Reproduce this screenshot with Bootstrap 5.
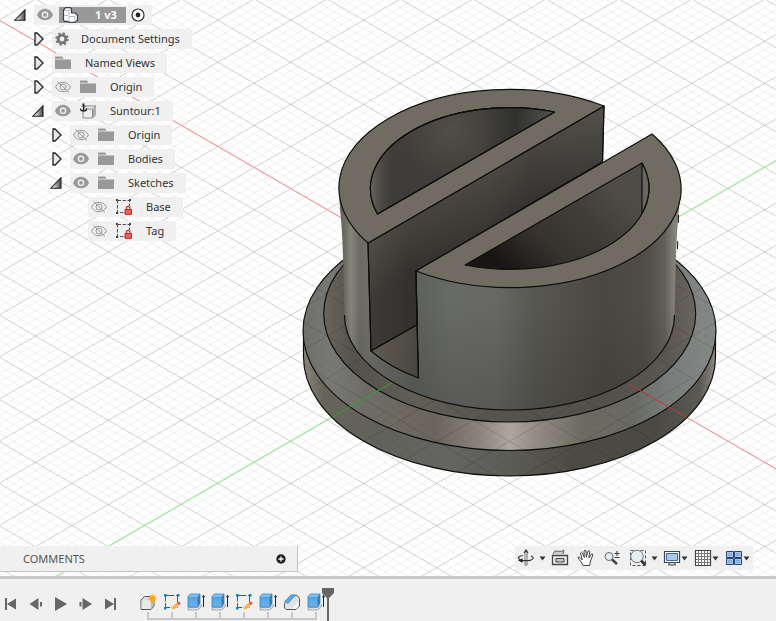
<!DOCTYPE html>
<html lang="en">
<head>
<meta charset="utf-8">
<meta name="viewport" content="width=device-width, initial-scale=1">
<title>Suntour cap</title>
<link rel="stylesheet" href="https://cdn.jsdelivr.net/npm/bootstrap@5.3.0/dist/css/bootstrap.min.css">
<style>
body{font-family:"Noto Sans","DejaVu Sans",sans-serif;font-size:11px;line-height:20px;color:#333;background:#fff}
button{border:0;background:none;padding:0;color:inherit;font:inherit}
svg{display:block}
.scene{inset:0}
.canvas-area{padding:3px 0 4px}
.tree-row{height:24px}
.lvl0{padding-left:14px}.lvl1{padding-left:32px}.lvl2{padding-left:50px}.lvl3{padding-left:88px}
.twist{width:20px}
.shut-icon{margin-left:2px}
.chip{background:#f0f0f0;height:20px;padding:0 12px 0 3px}
.root-chip{padding-right:6px}
.chip svg{width:16px;height:16px}
.gap-icon{margin-right:9px}
.txt-lead{margin-left:14px}
.gear-lead{margin-left:10px}
.root-name{background:#989898;color:#fff;font-weight:700;height:16px;line-height:16px;padding:0 9px 0 2px}
.root-eye{margin-right:6px}
.root-name svg{width:18px}
.comments{width:298px;height:26px;background:#f0f0f0;border:solid #c4c4c4;border-width:0 1px 1px 0;padding:0 11px 0 23px;color:#555}
.view-tools{background:#f0f0f0;height:24px;margin:0 23px 2px 0;padding:0 3px 0 2px}
.view-tools svg{width:18px;height:18px}
.view-tools .drop svg{width:7px;height:5px}
.tool-gap{margin-right:8px}
.drop-gap{margin:0 5px 0 4px}
.drop-near{margin-right:6px}
.timeline{background:#f0f0f0;border-top:3px solid #c9c9c9;height:45px;color:#666}
.transport{gap:11px;padding:2px 18px 0 4px;height:48px}
.feature{width:24px}
.feature svg{width:18px;height:18px;margin:14px auto 0}
.rail{width:24px;height:8px;margin-top:1px;background:linear-gradient(#c8c8c8,#c8c8c8) center/2px 8px no-repeat,linear-gradient(#c8c8c8,#c8c8c8) bottom/24px 2px no-repeat}
.feature:first-child .rail{background-position:center,12px 100%}
.feature.final .rail{background-position:center,-12px 100%}
.marker{margin-left:-6px;padding-top:9px}
</style>
<script src="https://cdn.jsdelivr.net/npm/bootstrap@5.3.0/dist/js/bootstrap.bundle.min.js"></script>
</head>
<body class="vh-100 d-flex flex-column overflow-hidden">

<svg width="0" height="0" class="position-absolute" aria-hidden="true">
<defs>
<linearGradient id="gTri"><stop offset=".2" stop-color="#eee"/><stop offset="1" stop-color="#444"/></linearGradient>
<linearGradient id="gBlue" x2="0" y2="1"><stop offset="0" stop-color="#4f9fdf"/><stop offset="1" stop-color="#6bb3ea"/></linearGradient>
<symbol id="open" viewBox="0 0 12 12"><path d="M.8 11.2H11V.8z" fill="url(#gTri)" stroke="#222" stroke-width="1.1"/></symbol>
<symbol id="shut" viewBox="0 0 10 14"><path d="M1 1v12h2l6-6-6-6z" fill="#e4e8ec" stroke="#222" stroke-width="1.3"/></symbol>
<symbol id="eye" viewBox="0 0 16 16"><path d="M0 8.2C3-.3 13-.3 16 8.2 13 15 3 15 0 8.200z" fill="#999"/><circle cx="8" cy="7.800" r="3.300" fill="#f0f0f0"/><circle cx="8" cy="7.800" r="1.900" fill="#999"/></symbol>
<symbol id="hid" viewBox="0 0 16 16"><g fill="none" stroke="#999" stroke-width="1"><path d="M.6 8C3.500 1.700 12.500 1.700 15.400 8 12.500 14.300 3.500 14.300.6 8z"/><circle cx="8" cy="8" r="3"/><path d="M2.500 2.500l11.500 11"/></g></symbol>
<symbol id="folder" viewBox="0 0 16 16"><path d="M0 1.500h7l1.500 2.200H0zM0 4.500h16V14H0z" fill="#999"/></symbol>
<symbol id="gear" viewBox="0 0 16 16"><circle cx="7" cy="8" r="3.800" fill="none" stroke="#777" stroke-width="2.800"/><circle cx="7" cy="8" r="5.700" fill="none" stroke="#777" stroke-width="2" stroke-dasharray="2.300 2.180"/></symbol>
<symbol id="cubes" viewBox="0 0 18 16"><path d="M2.500 3L4.500.7h4.800L10.500 2v4h3.700L16.500 8v5l-2.300 2.400H8L7 14.300H3.500L2.500 13z" fill="#fff" stroke="#3c3f45" stroke-width="1.200" stroke-linejoin="round"/><path d="M3 3.500h5L10 2M8 3.500V8M3 8.500h4.500M8.500 9.500h5.200L16 8M13.700 9.500V15M8 9v6" fill="none" stroke="#aab1bd" stroke-width=".9"/></symbol>
<symbol id="anchor" viewBox="0 0 16 16"><path d="M3 6l3-3h10v8.500L12.500 15H3z" fill="#eee" stroke="#888"/><path d="M3 6h9.500v9M12.500 6L16 3" fill="none" stroke="#888"/><path d="M13 6.500l2.500-2.500v7.300L13 14z" fill="#aaa"/><path d="M3.500 1.500v7M1.500 3h4M.3 5.500C.5 9 6.500 9 6.700 5.500" fill="none" stroke="#222" stroke-width="1.200"/><circle cx="3.500" cy="1.200" r="1" fill="#222"/></symbol>
<symbol id="locked" viewBox="0 0 16 16"><path d="M1.500 1.500h12v12h-12z" fill="none" stroke="#555" stroke-dasharray="3.500 1.500"/><path d="M0 0h2v2H0zM13 0h2v2h-2zM0 13h2v2H0z" fill="#444"/><path d="M8 7h8v9H8z" fill="#f0f0f0"/><path d="M9 10.500h6.500v4.800H9z" fill="#e36464" stroke="#c22"/><path d="M10.500 10V8.300q1.700-2 3.400 0V10" fill="none" stroke="#c22" stroke-width="1.200"/></symbol>
<symbol id="caret" viewBox="0 0 7 5"><path d="M.5.500h6L3.500 4.500z" fill="#333"/></symbol>
<symbol id="orbit" viewBox="0 0 18 18"><path d="M8 2.500h2V16H8z" fill="#fff" stroke="#445" stroke-width=".8"/><path d="M7 4l2-3 2 3M14 7c3 1 3 3.500-1 4.300-3 .7-7 .2-11 0M6 6.500C1.500 7 0 9 3 10.500" fill="none" stroke="#333" stroke-width="1.200"/><path d="M1 11.500l4.500-2.300v4.600z" fill="#222"/></symbol>
<symbol id="look" viewBox="0 0 18 18"><path d="M1.500 6.500h15v9h-15z" fill="#e8eaec" stroke="#444" stroke-width="1.300"/><path d="M5 9.500h8v3.500H5z" fill="#c4cad0" stroke="#444"/><path d="M2 5l2-3 6 .5 3-1.500-1 4" fill="#ccc" stroke="#666"/></symbol>
<symbol id="pan" viewBox="0 0 18 18"><path d="M6 16.500C5 13 2 11 1 8.500q1-1 2.500.5l1.800 2L3.500 4Q4.300 2.500 5.500 4L7.300 8.500 7 2Q8 .5 9 2l.3 6.300L11 2q1.200-1 1.800.5l-1 6.500 2.700-4q1.500-.3 1.300 1L13.500 12l-1 4.500z" fill="#fff" stroke="#444" stroke-width="1" stroke-linejoin="round"/></symbol>
<symbol id="zoomer" viewBox="0 0 18 18"><circle cx="6" cy="7.500" r="4" fill="#e8f2f5" stroke="#667"/><path d="M9 10.500l5 4.500" stroke="#444" stroke-width="2.600"/><path d="M11.500 4.500h5M14 2v5M11.500 8.500h5" stroke="#333"/></symbol>
<symbol id="zoomwin" viewBox="0 0 18 18"><path d="M1.500 1.500h15v15h-15z" fill="none" stroke="#555" stroke-dasharray="3 2"/><circle cx="8" cy="7.500" r="6.200" fill="#e3f0ef" stroke="#778"/><path d="M12 11.500l4.500 4.500" stroke="#333" stroke-width="2.600"/></symbol>
<symbol id="display" viewBox="0 0 18 18"><path d="M1.500 2.500h15v11h-15z" fill="#fff" stroke="#444" stroke-width="1.200"/><path d="M3.500 4.500h11v7h-11z" fill="#a9c8ee" stroke="#3568a4"/><path d="M6.500 13.500h5l1 2.500h-7z" fill="#ddd" stroke="#444"/></symbol>
<symbol id="gridic" viewBox="0 0 18 18"><path d="M1.500 1.500h15v15h-15z" fill="#fff" stroke="#444" stroke-width="1.200"/><path d="M4.500 2v14M7.500 2v14M10.500 2v14M13.500 2v14M2 4.500h14M2 7.500h14M2 10.500h14M2 13.500h14" stroke="#777"/></symbol>
<symbol id="panes" viewBox="0 0 18 18"><g fill="#a9c8ee" stroke="#2b446b" stroke-width="1"><path d="M1.500 2.500h7v6h-7zM9.500 2.500h7v6h-7zM1.500 9.500h7v6h-7zM9.500 9.500h7v6h-7z"/></g><path d="M3.500 4.500h3v2h-3zM11.500 4.500h3v2h-3zM3.500 11.500h3v2h-3zM11.500 11.500h3v2h-3z" fill="none" stroke="#7ba6dd"/></symbol>
<symbol id="comp" viewBox="0 0 18 18"><path d="M2 7l3.500-3.500H15V13l-3 3.500H2z" fill="#ddd" stroke="#555" stroke-linejoin="round"/><path d="M2.500 7.500h9V16h-9z" fill="#e8e8e8"/><path d="M12 8l2.500-2.500V13L12 16z" fill="#bbb"/><path d="M13 0l1 3 3-1-1.500 2.500L18 6l-2.500.7.5 2.800-2.700-1.700L11.500 10l-.2-3L8.500 6l2.600-1.200L10 2l2.500 1z" fill="#ffa800"/></symbol>
<symbol id="sketch" viewBox="0 0 18 18"><path d="M2.500 2.500h12v12h-12z" fill="none" stroke="#555" stroke-dasharray="9 1.500"/><path d="M1 1h2.500v2.500H1zM14 1h2.500v2.500H14zM1 14h2.500v2.500H1z" fill="#0a86dc"/><path d="M8 17.500l1-4 5-5 3.500 3-5.500 5z" fill="#f0f0f0"/><path d="M9 16.500l.8-3 4-3.800 2.200 2.200-4 3.800z" fill="#fbb13c"/><path d="M13.800 9.700l1.500-1.300q2 .3 2.300 2L16 11.900z" fill="#e5484d"/></symbol>
<symbol id="extrude" viewBox="0 0 18 18"><path d="M1 14.500h10l3.500-3v1.800L11 17H1z" fill="#ddd" stroke="#999" stroke-width=".7"/><path d="M1 3.500L3.500 1H13v9.500L10.500 14H1z" fill="url(#gBlue)" stroke="#3a80bd" stroke-width=".8" stroke-linejoin="round"/><path d="M10.500 4L13 1.500v9L10.500 13.500z" fill="#3d7db5"/><path d="M1.500 3.700L3.700 1.500h8.700l-2 2.200z" fill="#86c4f3"/><path d="M16.500 14V3" stroke="#222" stroke-width="1"/><path d="M15 4.200l1.500-2.700L18 4.200z" fill="#222"/></symbol>
<symbol id="chamfer" viewBox="0 0 18 18"><path d="M1.500 10.500L9.500 2l4.500.5 2.500 3V13L13 16.500H3L1.500 15z" fill="#e2e2e2" stroke="#555" stroke-linejoin="round"/><path d="M1.500 8.500L8 2h4.500L5 10.500z" fill="#5ba8e5" stroke="#3a80bd" stroke-width=".7"/><path d="M8.500 16l7-7V13L13 16z" fill="#fff"/></symbol>
</defs>
</svg>

<main class="canvas-area position-relative flex-grow-1 d-flex flex-column">
<svg class="scene position-absolute w-100 h-100" viewBox="0 0 776 576" preserveAspectRatio="xMidYMid slice" role="img" aria-label="3D model of a slotted cap on a ground grid">
<defs>
<linearGradient id="cyl" gradientUnits="userSpaceOnUse" x1="339" y1="0" x2="680" y2="0"><stop offset="0" stop-color="#62615a"/><stop offset=".018" stop-color="#6d6c64"/><stop offset=".035" stop-color="#87857a"/><stop offset=".06" stop-color="#6b6a63"/><stop offset=".09" stop-color="#6f706b"/><stop offset=".22" stop-color="#5d605b"/><stop offset=".33" stop-color="#686a66"/><stop offset=".46" stop-color="#676865"/><stop offset=".58" stop-color="#575650"/><stop offset=".78" stop-color="#4a4741"/><stop offset=".9" stop-color="#4f4d47"/><stop offset=".955" stop-color="#605f59"/><stop offset=".985" stop-color="#85837a"/><stop offset="1" stop-color="#77756d"/></linearGradient>
<linearGradient id="shade" gradientUnits="userSpaceOnUse" x1="0" y1="260" x2="0" y2="410"><stop offset=".3" stop-color="#222" stop-opacity="0"/><stop offset="1" stop-color="#222" stop-opacity=".22"/></linearGradient>
<linearGradient id="rim" gradientUnits="userSpaceOnUse" x1="303" y1="0" x2="716" y2="0"><stop offset="0" stop-color="#8c877b"/><stop offset=".05" stop-color="#67645b"/><stop offset=".18" stop-color="#62625c"/><stop offset=".35" stop-color="#646661"/><stop offset=".5" stop-color="#5d5d58"/><stop offset=".65" stop-color="#4e4b45"/><stop offset=".85" stop-color="#4b4944"/><stop offset=".96" stop-color="#5c5a54"/><stop offset="1" stop-color="#8f8c84"/></linearGradient>
<linearGradient id="cham" gradientUnits="userSpaceOnUse" x1="303" y1="0" x2="716" y2="0"><stop offset="0" stop-color="#70706b"/><stop offset=".07" stop-color="#787976"/><stop offset=".15" stop-color="#6f6d66"/><stop offset=".32" stop-color="#6b665d"/><stop offset=".43" stop-color="#8a867d"/><stop offset=".5" stop-color="#aca89f"/><stop offset=".56" stop-color="#938f86"/><stop offset=".68" stop-color="#6d6a60"/><stop offset=".8" stop-color="#696a64"/><stop offset=".88" stop-color="#787d7b"/><stop offset="1" stop-color="#858986"/></linearGradient>
<linearGradient id="ring" gradientUnits="userSpaceOnUse" x1="324" y1="0" x2="696" y2="0"><stop offset="0" stop-color="#6b665d"/><stop offset=".08" stop-color="#55524c"/><stop offset=".25" stop-color="#625f57"/><stop offset=".5" stop-color="#55534d"/><stop offset=".75" stop-color="#54514b"/><stop offset=".92" stop-color="#5a5650"/><stop offset="1" stop-color="#6b675f"/></linearGradient>
<linearGradient id="slot" gradientUnits="userSpaceOnUse" x1="368" y1="0" x2="604" y2="0"><stop offset="0" stop-color="#4e4b45"/><stop offset=".17" stop-color="#3f3c37"/><stop offset=".5" stop-color="#43403b"/><stop offset=".7" stop-color="#3b3935"/><stop offset="1" stop-color="#494742"/></linearGradient>
<linearGradient id="slotV" gradientUnits="userSpaceOnUse" x1="450" y1="180" x2="480" y2="240"><stop offset="0" stop-color="#77736a" stop-opacity=".25"/><stop offset="1" stop-color="#111" stop-opacity=".25"/></linearGradient>
<radialGradient id="pocketA" gradientUnits="userSpaceOnUse" cx="450" cy="130" r="110"><stop offset="0" stop-color="#514e48"/><stop offset=".45" stop-color="#403e3a"/><stop offset="1" stop-color="#3b3b38"/></radialGradient>
<linearGradient id="pocketEdge" gradientUnits="userSpaceOnUse" x1="370" y1="0" x2="555" y2="0"><stop offset="0" stop-color="#69675e"/><stop offset=".14" stop-color="#3f3d39" stop-opacity="0"/><stop offset=".6" stop-color="#343532" stop-opacity="0"/><stop offset=".78" stop-color="#2d2e2c" stop-opacity=".8"/><stop offset="1" stop-color="#555650"/></linearGradient>
<linearGradient id="pocketB" gradientUnits="userSpaceOnUse" x1="510" y1="272" x2="600" y2="175"><stop offset="0" stop-color="#171614"/><stop offset=".35" stop-color="#36332f"/><stop offset=".7" stop-color="#403e39"/><stop offset="1" stop-color="#4e4c47"/></linearGradient>
<linearGradient id="floor" gradientUnits="userSpaceOnUse" x1="375" y1="350" x2="418" y2="355"><stop offset="0" stop-color="#5f5b52"/><stop offset="1" stop-color="#494640"/></linearGradient>
<clipPath id="baseClip"><path d="M303 331A206.500 119.500 0 0 1 716 331L715.500 357A206 119 0 0 1 303.500 357z"/></clipPath>
</defs>
<g fill="none">
<path class="minor" stroke="#000" stroke-opacity=".065" stroke-width=".9"/>
<path class="major" stroke="#000" stroke-opacity=".18"/>
<path d="M-91-32L1109 661.300" stroke="#ff8c8c"/><path d="M-91 661.300L1109-32" stroke="#8cf58c"/>
</g>
<g stroke="#0d0d0b" stroke-width="1.150" stroke-linejoin="round">
<path d="M303.500 331V357A206 119 0 0 0 715.500 357V331z" fill="url(#rim)"/>
<ellipse cx="509.500" cy="331" rx="206.500" ry="119.500" fill="url(#cham)"/>
<ellipse cx="509.700" cy="313.500" rx="186" ry="108.500" fill="url(#ring)"/>
</g>
<g clip-path="url(#baseClip)" fill="none">
<path class="minor" stroke="#000" stroke-opacity=".04" stroke-width=".8"/>
<path class="major" stroke="#000" stroke-opacity=".12"/>
<path d="M509.500 315L1109 661.300" stroke="#c23b34"/><path d="M-91 661.300L509.500 315" stroke="#35a536"/>
</g>
<path d="M339 188.500L340 210Q343 230 344.500 315A165 95 0 0 0 674.500 315Q676 230 679 210L680 188.500z" fill="url(#cyl)"/>
<path d="M344.500 260V315A165 95 0 0 0 674.500 315V260z" fill="url(#shade)"/>
<path d="M344.500 315A165 95 0 0 0 674.500 315" fill="none" stroke="#0d0d0b" stroke-width="1.200"/>
<path d="M678.500 215l-1.500 50" stroke="#111" stroke-dasharray="8 18"/>
<g stroke="#0d0d0b" stroke-width="1.150" stroke-linejoin="round">
<path d="M368 243L604 106 602.500 162 416 271 417 325 371 351z" fill="url(#slot)"/>
<path d="M368 243L604 106 602.500 162 416 271 417 325 371 351z" fill="url(#slotV)"/>
<path d="M371 351L417 325 418.500 378Q391 368 371 351z" fill="url(#floor)"/>
<path d="M416 271L418.500 378" fill="none"/>
<path fill-rule="evenodd" d="M368 243A170.500 98.500 0 0 1 604 106zM377.500 214L554.500 112A139 81 0 0 0 377.500 214z" fill="#706c62"/>
<path d="M377.500 214L554.500 112A139 81 0 0 0 377.500 214z" fill="url(#pocketA)"/>
<path d="M377.500 214L554.500 112A139 81 0 0 0 377.500 214z" fill="url(#pocketEdge)"/>
<path d="M416 271L652 134A170.500 98.500 0 0 1 416 271z" fill="#706c62"/>
<path d="M465 265L642 163A139 81 0 0 1 465 265z" fill="url(#pocketB)"/>
<path d="M642 163A139 81 0 0 1 642 213z" fill="#68675f"/>
</g>
</svg>

<ul class="list-unstyled mb-0 position-relative">
<li class="tree-row lvl0 d-flex align-items-center"><button class="twist" aria-label="Collapse"><svg width="12" height="12"><use href="#open"/></svg></button><div class="chip root-chip d-flex align-items-center"><button class="root-eye" aria-label="Hide"><svg><use href="#eye"/></svg></button><span class="root-name d-flex align-items-center"><svg class="me-3"><use href="#cubes"/></svg>1 v3</span><label class="ms-1 d-flex"><input type="radio" class="visually-hidden" checked aria-label="Activate component"><svg viewBox="0 0 16 16"><circle cx="8" cy="8" r="6" fill="#fff" stroke="#333" stroke-width="1.200"/><circle cx="8" cy="8" r="2.400" fill="#222"/></svg></label></div></li>
<li class="tree-row lvl1 d-flex align-items-center"><button class="twist" aria-label="Expand"><svg class="shut-icon" width="10" height="14"><use href="#shut"/></svg></button><div class="chip d-flex align-items-center"><svg><use href="#gear"/></svg><span class="gear-lead">Document Settings</span></div></li>
<li class="tree-row lvl1 d-flex align-items-center"><button class="twist" aria-label="Expand"><svg class="shut-icon" width="10" height="14"><use href="#shut"/></svg></button><div class="chip d-flex align-items-center"><svg><use href="#folder"/></svg><span class="txt-lead">Named Views</span></div></li>
<li class="tree-row lvl1 d-flex align-items-center"><button class="twist" aria-label="Expand"><svg class="shut-icon" width="10" height="14"><use href="#shut"/></svg></button><div class="chip d-flex align-items-center"><button class="gap-icon" aria-label="Show"><svg><use href="#hid"/></svg></button><svg><use href="#folder"/></svg><span class="txt-lead">Origin</span></div></li>
<li class="tree-row lvl1 d-flex align-items-center"><button class="twist" aria-label="Collapse"><svg width="12" height="12"><use href="#open"/></svg></button><div class="chip d-flex align-items-center"><button class="gap-icon" aria-label="Hide"><svg><use href="#eye"/></svg></button><svg><use href="#anchor"/></svg><span class="txt-lead">Suntour:1</span></div></li>
<li class="tree-row lvl2 d-flex align-items-center"><button class="twist" aria-label="Expand"><svg class="shut-icon" width="10" height="14"><use href="#shut"/></svg></button><div class="chip d-flex align-items-center"><button class="gap-icon" aria-label="Show"><svg><use href="#hid"/></svg></button><svg><use href="#folder"/></svg><span class="txt-lead">Origin</span></div></li>
<li class="tree-row lvl2 d-flex align-items-center"><button class="twist" aria-label="Expand"><svg class="shut-icon" width="10" height="14"><use href="#shut"/></svg></button><div class="chip d-flex align-items-center"><button class="gap-icon" aria-label="Hide"><svg><use href="#eye"/></svg></button><svg><use href="#folder"/></svg><span class="txt-lead">Bodies</span></div></li>
<li class="tree-row lvl2 d-flex align-items-center"><button class="twist" aria-label="Collapse"><svg width="12" height="12"><use href="#open"/></svg></button><div class="chip d-flex align-items-center"><button class="gap-icon" aria-label="Hide"><svg><use href="#eye"/></svg></button><svg><use href="#folder"/></svg><span class="txt-lead">Sketches</span></div></li>
<li class="tree-row lvl3 d-flex align-items-center"><div class="chip d-flex align-items-center"><button class="gap-icon" aria-label="Show"><svg><use href="#hid"/></svg></button><svg><use href="#locked"/></svg><span class="txt-lead">Base</span></div></li>
<li class="tree-row lvl3 d-flex align-items-center"><div class="chip d-flex align-items-center"><button class="gap-icon" aria-label="Show"><svg><use href="#hid"/></svg></button><svg><use href="#locked"/></svg><span class="txt-lead">Tag</span></div></li>
</ul>

<div class="mt-auto d-flex justify-content-between align-items-end position-relative">
<div class="comments d-flex align-items-center justify-content-between"><span>COMMENTS</span><button aria-label="Expand comments"><svg width="10" height="10" viewBox="0 0 10 10"><circle cx="5" cy="5" r="4.700" fill="#222"/><path d="M5 2.500v5M2.500 5h5" stroke="#fff" stroke-width="1.300"/></svg></button></div>
<div class="view-tools d-flex align-items-center" role="toolbar" aria-label="View">
<button aria-label="Orbit"><svg><use href="#orbit"/></svg></button><button class="drop drop-gap" aria-label="Orbit options"><svg><use href="#caret"/></svg></button>
<button class="tool-gap" aria-label="Look at"><svg><use href="#look"/></svg></button>
<button class="tool-gap" aria-label="Pan"><svg><use href="#pan"/></svg></button>
<button class="tool-gap" aria-label="Zoom"><svg><use href="#zoomer"/></svg></button>
<button aria-label="Zoom window"><svg><use href="#zoomwin"/></svg></button><button class="drop drop-gap" aria-label="Zoom options"><svg><use href="#caret"/></svg></button>
<button aria-label="Display"><svg><use href="#display"/></svg></button><button class="drop drop-near" aria-label="Display options"><svg><use href="#caret"/></svg></button>
<button aria-label="Grid"><svg><use href="#gridic"/></svg></button><button class="drop drop-near" aria-label="Grid options"><svg><use href="#caret"/></svg></button>
<button aria-label="Viewports"><svg><use href="#panes"/></svg></button><button class="drop" aria-label="Viewport options"><svg><use href="#caret"/></svg></button>
</div>
</div>
</main>

<footer class="timeline d-flex align-items-start">
<div class="transport d-flex align-items-center">
<button aria-label="Go to start"><svg width="14" height="14"><path d="M1 1h2v12H1zM12 1.500v11L3 7z" fill="#666"/></svg></button>
<button aria-label="Step back"><svg width="14" height="14"><path d="M9.500 1v12L.5 7zM11 5h2v4.500h-2z" fill="#666"/></svg></button>
<button aria-label="Play"><svg width="14" height="14"><path d="M1 0v14L13 7z" fill="#666"/></svg></button>
<button aria-label="Step forward"><svg width="14" height="14"><path d="M3.500 1v12l9.500-6zM.5 5h2v4.500h-2z" fill="#666"/></svg></button>
<button aria-label="Go to end"><svg width="14" height="14"><path d="M1 1.500v11L10 7zM10 1h2v12h-2z" fill="#666"/></svg></button>
</div>
<ol class="list-unstyled d-flex mb-0">
<li class="feature"><svg><use href="#comp"/></svg><div class="rail"></div></li>
<li class="feature"><svg><use href="#sketch"/></svg><div class="rail"></div></li>
<li class="feature"><svg><use href="#extrude"/></svg><div class="rail"></div></li>
<li class="feature"><svg><use href="#extrude"/></svg><div class="rail"></div></li>
<li class="feature"><svg><use href="#sketch"/></svg><div class="rail"></div></li>
<li class="feature"><svg><use href="#extrude"/></svg><div class="rail"></div></li>
<li class="feature"><svg><use href="#chamfer"/></svg><div class="rail"></div></li>
<li class="feature final"><svg><use href="#extrude"/></svg><div class="rail"></div></li>
<li class="marker"><svg width="12" height="33"><path d="M0 0h12v5L7 10v23H5V10L0 5z" fill="#666"/></svg></li>
</ol>
</footer>

<script>
// Ground grid: two diagonal families of lines; every fifth line is a major one.
const lines = { major: '', minor: '' };
for (let k = -130; k <= 130; k++) {
  const y = 315 + k * 8.424, kind = k % 5 ? 'minor' : 'major';
  lines[kind] += `M-90.5 ${y - 346.6}L1109.5 ${y + 346.6}M-90.5 ${y + 346.6}L1109.5 ${y - 346.6}`;
}
for (const kind in lines) document.querySelectorAll('.' + kind).forEach(p => p.setAttribute('d', lines[kind]));
</script>
</body>
</html>
